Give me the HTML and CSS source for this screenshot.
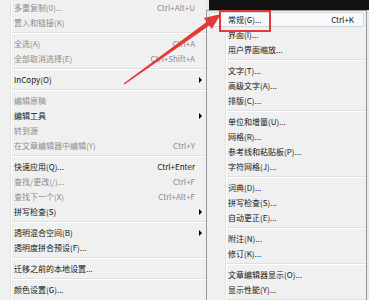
FILE: index.html
```html
<!DOCTYPE html>
<html lang="zh-CN">
  <head>
    <meta charset="UTF-8" />
    <title>编辑 - 首选项</title>
    <link rel="stylesheet" href="styles.css">
  </head>
  <body>
    <div class="screen">
      <div class="menu menu-main">
        <div class="item off"><span class="label">多重复制(0)...</span><span class="key">Ctrl+Alt+U</span></div>
        <div class="item off"><span class="label">置入和链接(K)</span></div>
        <div class="sep"></div>
        <div class="item off"><span class="label">全选(A)</span><span class="key">Ctrl+A</span></div>
        <div class="item off"><span class="label">全部取消选择(E)</span><span class="key">Ctrl+Shift+A</span></div>
        <div class="sep"></div>
        <div class="item more"><span class="label">InCopy(O)</span></div>
        <div class="sep"></div>
        <div class="item off"><span class="label">编辑原稿</span></div>
        <div class="item more"><span class="label">编辑工具</span></div>
        <div class="item off"><span class="label">转到源</span></div>
        <div class="item off"><span class="label">在文章编辑器中编辑(Y)</span><span class="key">Ctrl+Y</span></div>
        <div class="sep"></div>
        <div class="item"><span class="label">快速应用(Q)...</span><span class="key">Ctrl+Enter</span></div>
        <div class="item off"><span class="label">查找/更改(/)...</span><span class="key">Ctrl+F</span></div>
        <div class="item off"><span class="label">查找下一个(X)</span><span class="key">Ctrl+Alt+F</span></div>
        <div class="item more"><span class="label">拼写检查(S)</span></div>
        <div class="sep"></div>
        <div class="item more"><span class="label">透明混合空间(B)</span></div>
        <div class="item"><span class="label">透明度拼合预设(F)...</span></div>
        <div class="sep"></div>
        <div class="item"><span class="label">迁移之前的本地设置...</span></div>
        <div class="sep"></div>
        <div class="item"><span class="label">颜色设置(G)...</span></div>
        <div class="item"><span class="label">指定配置文件(R)...</span></div>
      </div>

      <div class="side">
        <div class="bar"></div>
        <div class="menu menu-sub">
          <div class="item hot"><span class="label">常规(G)...</span><span class="key">Ctrl+K</span></div>
          <div class="item"><span class="label">界面(I)...</span></div>
          <div class="item"><span class="label">用户界面缩放...</span></div>
          <div class="sep"></div>
          <div class="item"><span class="label">文字(T)...</span></div>
          <div class="item"><span class="label">高级文字(A)...</span></div>
          <div class="item"><span class="label">排版(C)...</span></div>
          <div class="sep"></div>
          <div class="item"><span class="label">单位和增量(U)...</span></div>
          <div class="item"><span class="label">网格(R)...</span></div>
          <div class="item"><span class="label">参考线和粘贴板(P)...</span></div>
          <div class="item"><span class="label">字符网格(J)...</span></div>
          <div class="sep"></div>
          <div class="item"><span class="label">词典(D)...</span></div>
          <div class="item"><span class="label">拼写检查(S)...</span></div>
          <div class="item"><span class="label">自动更正(E)...</span></div>
          <div class="sep"></div>
          <div class="item"><span class="label">附注(N)...</span></div>
          <div class="item"><span class="label">修订(K)...</span></div>
          <div class="sep"></div>
          <div class="item"><span class="label">文章编辑器显示(O)...</span></div>
          <div class="item"><span class="label">显示性能(Y)...</span></div>
          <div class="sep"></div>
        </div>
      </div>

      <!-- 标注：红框和箭头 -->
      <div class="callout"></div>
      <svg class="arrow" width="369" height="300" viewBox="0 0 369 300">
        <polygon points="123.6,83.6 207.2,21.6 209.8,25.2 124.4,84.4" fill="#e23a36" />
        <polygon points="221,14 211.8,29 203.8,18" fill="#e23a36" />
      </svg>
    </div>
  </body>
</html>
```

FILE: styles.css
```css
body {
  margin: 0;
  padding: 0;
  background: #e9e9e9;
  font-family: "Noto Sans CJK SC", "Liberation Sans", sans-serif;
  font-size: 8px;
  color: #151515;
}
.screen {
  position: relative;
  display: flex;
  width: 369px;
  height: 300px;
  overflow: hidden;
}
.menu {
  box-sizing: border-box;
  background-color: #f0f0f0;
}
.menu-main {
  flex: none;
  width: 206px;
  height: 300px;
  background: linear-gradient(to right, transparent 10px, #e2e3e3 10px, #e2e3e3 11px, #fff 11px, #fff 12px, transparent 12px), #f0f0f0;
}
.side {
  flex: none;
  display: flex;
  flex-direction: column;
  width: 163px;
  height: 300px;
}
.bar {
  flex: none;
  height: 10px;
  margin-left: 3px;
  background-color: #121212;
}
.menu-sub {
  flex: 1 0 auto;
  width: 161px;
  padding-top: 1px;
  border: 1px solid #979797;
  border-bottom: none;
  background: linear-gradient(to right, transparent 18px, #e2e3e3 18px, #e2e3e3 19px, #fff 19px, #fff 20px, transparent 20px), #f0f0f0;
}
.item {
  display: flex;
  align-items: center;
  height: 15px;
  line-height: 15px;
  white-space: nowrap;
}
.menu-main .item {
  padding-left: 14px;
}
.menu-main .item::after {
  content: "";
  width: 11px;
}
.menu-main .item.more::after {
  width: 0;
  height: 0;
  margin: 0 4px 0 4px;
  border-left: 3px solid #000;
  border-top: 3px solid transparent;
  border-bottom: 3px solid transparent;
}
.menu-sub .item {
  padding: 0 12px 0 21px;
}
.menu-sub .item.hot {
  margin: 0 2px;
  padding: 0 10px 0 19px;
  background-color: #f8f9fb;
  box-shadow: inset 0 0 0 1px #d3d8de;
  border-radius: 2px;
}
.label {
  flex: 1;
}
.key {
  text-align: right;
}
.off {
  color: #8c8c8c;
}
.sep {
  flex: none;
  height: 6px;
  background: linear-gradient(to bottom, transparent 2px, #e0e0e0 2px, #e0e0e0 3px, #fff 3px, #fff 4px, transparent 4px);
}
.menu-main .sep {
  margin-left: 12px;
}
.menu-sub .sep {
  margin-left: 20px;
}
.callout {
  position: absolute;
  left: 219px;
  top: 10px;
  width: 52px;
  height: 22px;
  box-sizing: border-box;
  border: 2px solid #e3393c;
}
.arrow {
  position: absolute;
  left: 0;
  top: 0;
  pointer-events: none;
}
```
